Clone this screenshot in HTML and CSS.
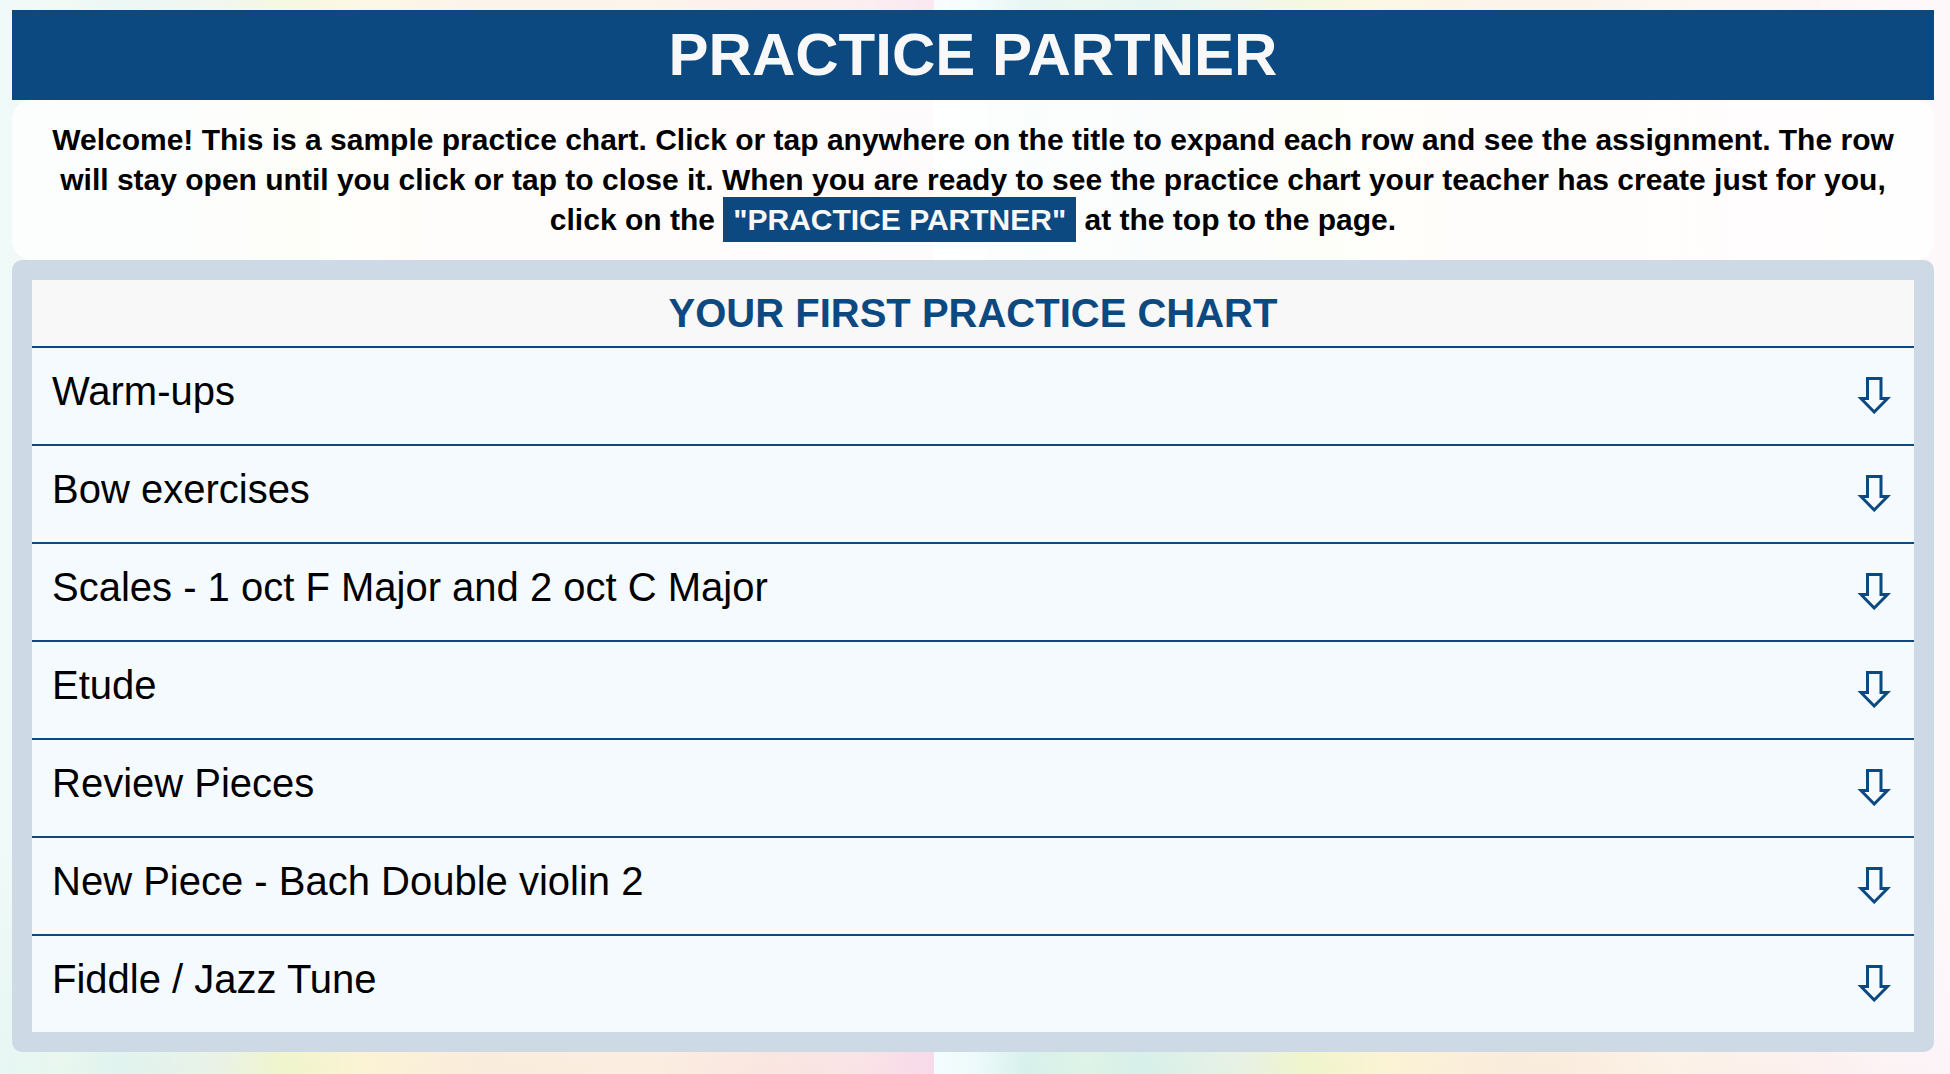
FILE: index.html
```html
<!DOCTYPE html>
<html lang="en">
<head>
<meta charset="utf-8">
<meta name="viewport" content="width=device-width, initial-scale=1">
<title>Practice Partner</title>
<link rel="stylesheet" href="styles.css">
</head>
<body>
<svg class="sprite" aria-hidden="true">
  <symbol id="arrow-down" viewBox="0 0 34 38">
    <path d="M10.5 2.5H24V22.5H30.5L17.2 36L4 22.5H10.5Z" fill="none" stroke="currentColor" stroke-width="3"/>
  </symbol>
</svg>
<header class="banner">
  <h1><a class="banner-link" href="#chart">PRACTICE PARTNER</a></h1>
</header>
<main>
  <p class="intro">Welcome! This is a sample practice chart. Click or tap anywhere on the title to expand each row and see the assignment. The row will stay open until you click or tap to close it. When you are ready to see the practice chart your teacher has create just for you, click on the <span class="tag">"PRACTICE PARTNER"</span> at the top to the page.</p>
  <section class="chart" id="chart">
    <h2 class="chart-title">YOUR FIRST PRACTICE CHART</h2>
    <button class="row" type="button" aria-expanded="false">Warm-ups<svg class="arrow" aria-hidden="true"><use href="#arrow-down"/></svg></button>
    <button class="row" type="button" aria-expanded="false">Bow exercises<svg class="arrow" aria-hidden="true"><use href="#arrow-down"/></svg></button>
    <button class="row" type="button" aria-expanded="false">Scales - 1 oct F Major and 2 oct C Major<svg class="arrow" aria-hidden="true"><use href="#arrow-down"/></svg></button>
    <button class="row" type="button" aria-expanded="false">Etude<svg class="arrow" aria-hidden="true"><use href="#arrow-down"/></svg></button>
    <button class="row" type="button" aria-expanded="false">Review Pieces<svg class="arrow" aria-hidden="true"><use href="#arrow-down"/></svg></button>
    <button class="row" type="button" aria-expanded="false">New Piece - Bach Double violin 2<svg class="arrow" aria-hidden="true"><use href="#arrow-down"/></svg></button>
    <button class="row" type="button" aria-expanded="false">Fiddle / Jazz Tune<svg class="arrow" aria-hidden="true"><use href="#arrow-down"/></svg></button>
  </section>
</main>
</body>
</html>
```
FILE: styles.css
```css
:root {
  --navy: #0d4981;
  --off-white: #f8f8f8;
}

* {
  box-sizing: border-box;
}

html {
  min-height: 100%;
  background:
    linear-gradient(to right, rgba(255, 255, 255, 0.4), rgba(255, 255, 255, 0) 15%, rgba(255, 255, 255, 0) 80%, rgba(255, 255, 255, 0.7)),
    linear-gradient(to bottom, rgba(255, 255, 255, 0.4), rgba(255, 255, 255, 0.4) 80%, rgba(255, 255, 255, 0)),
    linear-gradient(to right, #f4fcfe, #eefafb 4%, #d6f1ec 9%, #def3e6 15%, #d6f0ea 20%, #e8f1e4 30%, #eff5cc 36%, #fbf3d3 44%, #faecdc 56%, #fbeee0 72%, #fae5e0 84%, #fae3e6 93%, #f8d9ea) -90px 0 / 1024px 100% repeat-x;
}

body {
  margin: 0;
  padding: 10px 16px 22px 12px;
  font-family: "Liberation Sans", Arial, Helvetica, sans-serif;
  color: #000;
}

.sprite {
  display: none;
}

h1,
h2,
p {
  margin: 0;
}

.banner {
  background: var(--navy);
  font-size: 30px;
  text-align: center;
}

.banner-link {
  display: block;
  padding: 10px;
  line-height: 70px;
  color: var(--off-white);
  text-decoration: none;
}

.intro {
  padding: 20px 32px;
  border-radius: 20px;
  background: rgba(255, 255, 255, 0.8);
  font-size: 30px;
  font-weight: bold;
  line-height: 40px;
  text-align: center;
}

.tag {
  padding: 6px 10px;
  background: var(--navy);
  color: var(--off-white);
}

.chart {
  border: 20px solid #cdd9e5;
  border-radius: 10px;
}

.chart-title {
  padding: 10px 20px;
  background: var(--off-white);
  color: var(--navy);
  font-size: 40px;
  line-height: 46px;
  text-align: center;
}

.row {
  display: flex;
  justify-content: space-between;
  align-items: flex-start;
  width: 100%;
  padding: 20px 20px 30px;
  border: 0;
  border-top: 2px solid var(--navy);
  background: #f5faff;
  color: #000;
  font: inherit;
  font-size: 40px;
  line-height: 46px;
  text-align: left;
  cursor: pointer;
}

.arrow {
  flex: none;
  width: 34px;
  height: 38px;
  margin: 8px 3px 0;
  color: var(--navy);
}
```
